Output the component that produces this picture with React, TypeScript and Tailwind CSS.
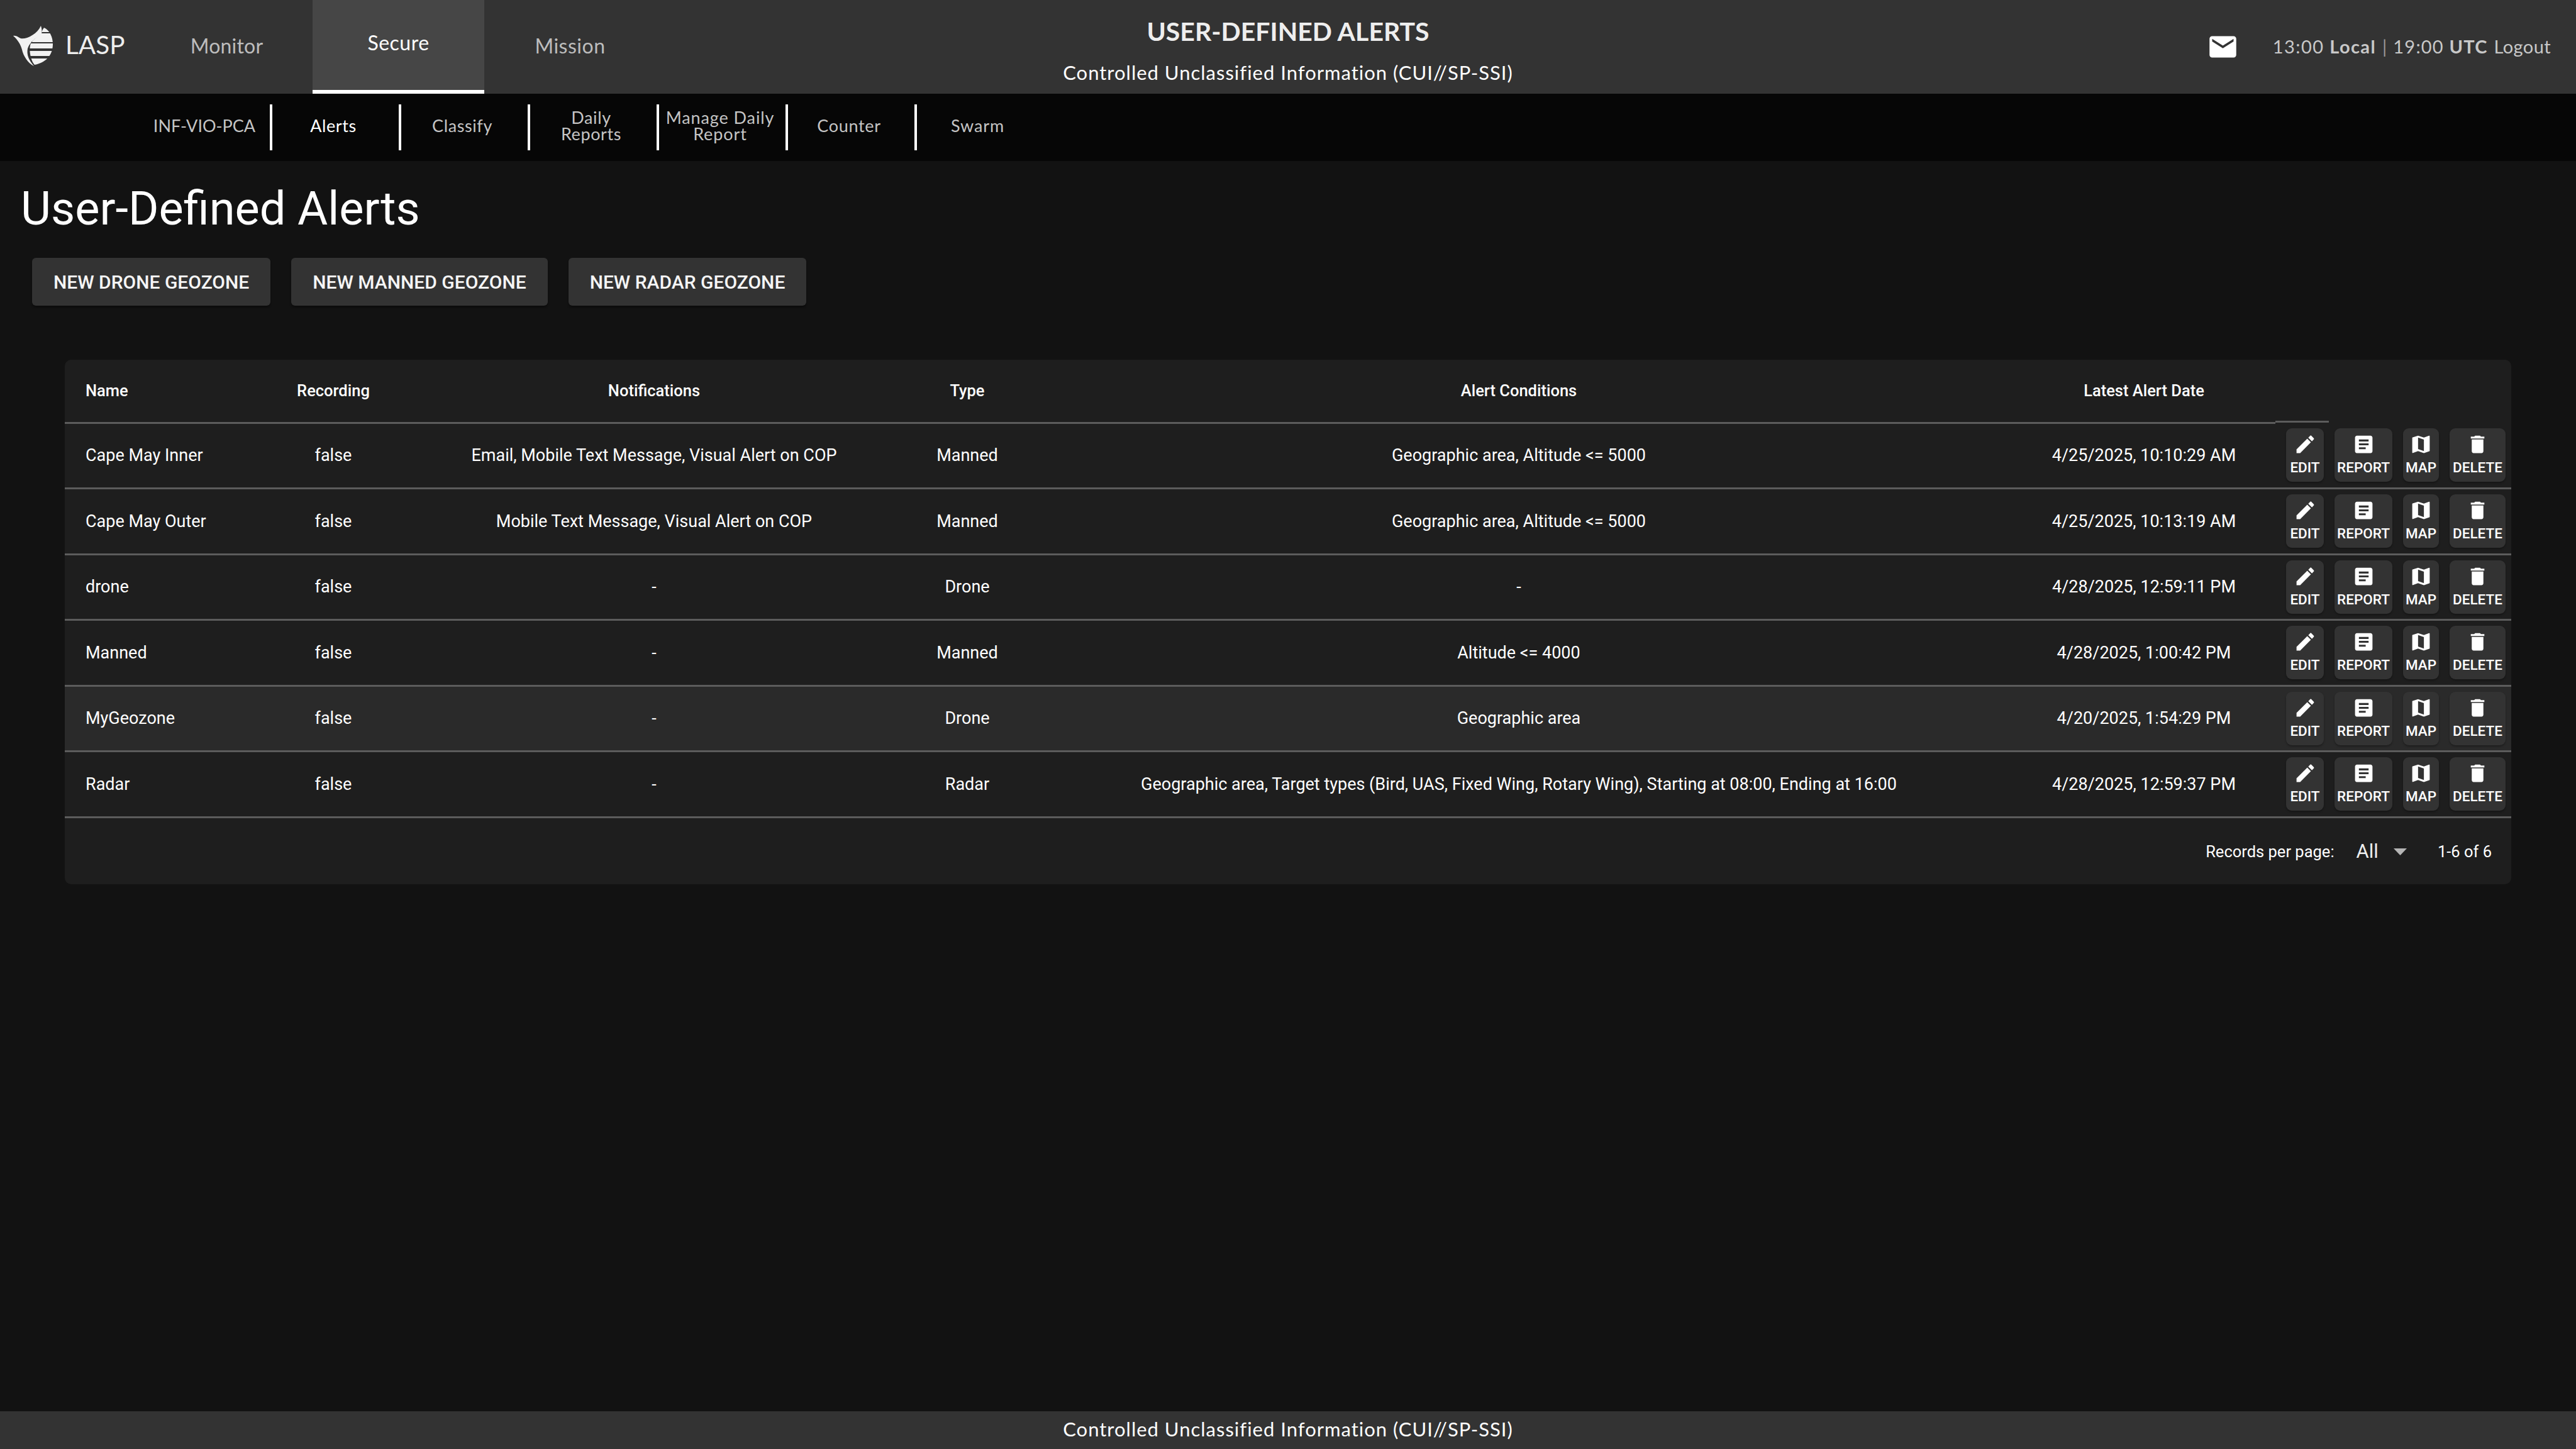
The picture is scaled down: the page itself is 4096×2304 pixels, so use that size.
import React from "react";

const P = {
  pencil: "M20.71,7.04C21.1,6.65 21.1,6 20.71,5.63L18.37,3.29C18,2.9 17.35,2.9 16.96,3.29L15.12,5.12L18.87,8.87M3,17.25V21H6.75L17.81,9.93L14.06,6.18L3,17.25Z",
  report: "M14,17H7V15H14M17,13H7V11H17M17,9H7V7H17M19,3H5C3.89,3 3,3.89 3,5V19A2,2 0 0,0 5,21H19A2,2 0 0,0 21,19V5C21,3.89 20.1,3 19,3Z",
  map: "M15,19L9,16.89V5L15,7.11M20.5,3C20.44,3 20.39,3 20.34,3L15,5.1L9,3L3.36,4.9C3.15,4.97 3,5.15 3,5.38V20.5A0.5,0.5 0 0,0 3.5,21C3.55,21 3.61,21 3.66,20.97L9,18.9L15,21L20.64,19.1C20.85,19 21,18.85 21,18.62V3.5A0.5,0.5 0 0,0 20.5,3Z",
  del: "M19,4H15.5L14.5,3H9.5L8.5,4H5V6H19M6,19A2,2 0 0,0 8,21H16A2,2 0 0,0 18,19V7H6V19Z",
  email: "M20,8L12,13L4,8V6L12,11L20,6M20,4H4C2.89,4 2,4.89 2,6V18A2,2 0 0,0 4,20H20A2,2 0 0,0 22,18V6C22,4.89 21.1,4 20,4Z",
};

function Icon({ d, className }: { d: string; className: string }) {
  return (
    <svg viewBox="0 0 24 24" className={className} fill="currentColor">
      <path d={d} />
    </svg>
  );
}

function Logo() {
  return (
    <svg viewBox="0 0 64 66" className="w-[64px] h-[66px]" fill="#f2f2f2">
      <defs>
        <clipPath id="shield">
          <path d="M49 5 C58 9 63 20 63 31 C63 46 55 60 34 64 C28 58 24 40 28 30 C32 22 44 18 47 8 Z" />
        </clipPath>
      </defs>
      <path d="M0 18 C5 17 9 21 12 22 C20 24 38 16 44 2 C46 8 46 14 44 17 C36 21 27 27 23 38 C21 48 25 57 33 66 C24 62 16 50 14 40 C12 32 7 24 0 18 Z" />
      <g clipPath="url(#shield)">
        <rect x="44" y="5" width="20" height="7" />
        <rect x="30" y="14" width="34" height="14" />
        <rect x="20" y="30" width="44" height="8" />
        <rect x="20" y="42" width="44" height="8" />
        <rect x="20" y="54" width="44" height="12" />
      </g>
    </svg>
  );
}

const subNav = [
  { label: "INF-VIO-PCA", cls: "w-[205px] h-[73px] flex items-center justify-center pr-[7px] pb-[5px] text-center text-[27px] leading-[25.6px] text-[#c4c4c4] border-r-4 border-white" },
  { label: "Alerts", cls: "w-[205px] h-[73px] flex items-center justify-center pr-[7px] pb-[5px] text-center text-[27px] leading-[25.6px] tracking-[0.6px] text-white border-r-4 border-white" },
  { label: "Classify", cls: "w-[205px] h-[73px] flex items-center justify-center pr-[7px] pb-[5px] text-center text-[27px] leading-[25.6px] tracking-[0.6px] text-[#c4c4c4] border-r-4 border-white" },
  { label: <>Daily<br />Reports</>, cls: "w-[205px] h-[73px] flex items-center justify-center pr-[7px] pb-[5px] text-center text-[27px] leading-[25.6px] tracking-[0.6px] text-[#c4c4c4] border-r-4 border-white" },
  { label: <>Manage Daily<br />Report</>, cls: "w-[205px] h-[73px] flex items-center justify-center pr-[7px] pb-[5px] text-center text-[27px] leading-[25.6px] tracking-[0.9px] text-[#c4c4c4] border-r-4 border-white" },
  { label: "Counter", cls: "w-[205px] h-[73px] flex items-center justify-center pr-[7px] pb-[5px] text-center text-[27px] leading-[25.6px] tracking-[0.7px] text-[#c4c4c4] border-r-4 border-white" },
  { label: "Swarm", cls: "w-[205px] h-[73px] flex items-center justify-center pr-[12px] pb-[5px] text-center text-[27px] leading-[25.6px] tracking-[0.9px] text-[#c4c4c4]" },
];

const rows = [
  ["Cape May Inner", "false", "Email, Mobile Text Message, Visual Alert on COP", "Manned", "Geographic area, Altitude <= 5000", "4/25/2025, 10:10:29 AM"],
  ["Cape May Outer", "false", "Mobile Text Message, Visual Alert on COP", "Manned", "Geographic area, Altitude <= 5000", "4/25/2025, 10:13:19 AM"],
  ["drone", "false", "-", "Drone", "-", "4/28/2025, 12:59:11 PM"],
  ["Manned", "false", "-", "Manned", "Altitude <= 4000", "4/28/2025, 1:00:42 PM"],
  ["MyGeozone", "false", "-", "Drone", "Geographic area", "4/20/2025, 1:54:29 PM"],
  ["Radar", "false", "-", "Radar", "Geographic area, Target types (Bird, UAS, Fixed Wing, Rotary Wing), Starting at 08:00, Ending at 16:00", "4/28/2025, 12:59:37 PM"],
];

const actions = [
  { label: "EDIT", d: P.pencil, w: "w-[60px]" },
  { label: "REPORT", d: P.report, w: "w-[92px]" },
  { label: "MAP", d: P.map, w: "w-[57px]" },
  { label: "DELETE", d: P.del, w: "w-[89px]" },
];

const headers = ["Recording", "Notifications", "Type", "Alert Conditions", "Latest Alert Date"];

export default function App() {
  return (
    <div className="h-[2304px] w-[4096px] flex flex-col bg-[#121212] text-white font-['Roboto',sans-serif] overflow-hidden">
      <header className="h-[149px] shrink-0 bg-[#333333] grid grid-cols-[1fr_auto_1fr] font-['Lato',sans-serif]">
        <div className="flex items-stretch">
          <div className="w-[224px] flex items-center pl-[21px] gap-[19px] pb-[6px]">
            <Logo />
            <span className="text-[40.5px] leading-none text-[#eeeeee]">LASP</span>
          </div>
          <div className="w-[273px] flex items-center justify-center pb-[4px] text-[32px] tracking-[0.2px] text-[#bdbdbd]">Monitor</div>
          <div className="w-[273px] flex items-center justify-center pb-[8px] text-[32px] tracking-[0.5px] text-white bg-[#464646] border-b-[6px] border-white">Secure</div>
          <div className="w-[273px] flex items-center justify-center pb-[4px] text-[32px] tracking-[0.5px] text-[#bdbdbd]">Mission</div>
        </div>
        <div className="flex flex-col items-center pt-[26px]">
          <div className="text-[41px] leading-[48px] font-bold text-[#eeeeee]">USER-DEFINED ALERTS</div>
          <div className="text-[31px] leading-[38px] mt-[22px] tracking-[1px] text-white">Controlled Unclassified Information (CUI//SP-SSI)</div>
        </div>
        <div className="flex items-center justify-end pr-[40px] pb-[1px] text-[29px] text-[#c8c8c8]">
          <Icon d={P.email} className="w-[51px] h-[51px] text-white mr-[54px]" />
          <span className="tracking-[1.4px]">13:00 <b>Local</b></span>
          <span className="mx-[10px] text-[#9a9a9a]">|</span>
          <span className="tracking-[1.2px]">19:00 <b>UTC</b></span>
          <span className="ml-[10px] tracking-[0.4px]">Logout</span>
        </div>
      </header>

      <nav className="h-[107px] shrink-0 bg-[#060606] flex items-center pl-[228px] font-['Lato',sans-serif]">
        {subNav.map((s, i) => (
          <div key={i} className={s.cls}>
            <span>{s.label}</span>
          </div>
        ))}
      </nav>

      <main className="flex-1 flex flex-col pt-[40px]">
        <h1 className="text-[74px] leading-[72px] pl-[33px] font-normal">User-Defined Alerts</h1>
        <div className="flex gap-[33px] pl-[51px] mt-[42px]">
          {["NEW DRONE GEOZONE", "NEW MANNED GEOZONE", "NEW RADAR GEOZONE"].map((b) => (
            <button key={b} className="h-[76px] px-[34px] rounded-[6px] bg-[#333333] text-[30px] font-medium text-[#f5f5f5] shadow-[0_3px_3px_rgba(0,0,0,0.35)]">
              {b}
            </button>
          ))}
        </div>

        <div className="ml-[103px] w-[3890px] mt-[86px] rounded-[10px] bg-[#1e1e1e] overflow-hidden">
          <table className="w-[3890px] table-fixed border-collapse text-[27px]">
            <colgroup>
              <col className="w-[323px]" />
              <col className="w-[208px]" />
              <col className="w-[812px]" />
              <col className="w-[184px]" />
              <col className="w-[1570px]" />
              <col className="w-[418px]" />
              <col className="w-[375px]" />
            </colgroup>
            <thead>
              <tr className="h-[100px]">
                <th className="text-left pl-[33px] text-[25.5px] font-medium border-b-[3px] border-[#5c5c5c]">Name</th>
                {headers.map((h) => (
                  <th key={h} className="text-center text-[25.5px] font-medium border-b-[3px] border-[#5c5c5c]">{h}</th>
                ))}
                <th className="relative">
                  <div className="absolute bottom-0 left-0 h-[3px] w-[85px] bg-[#5c5c5c]" />
                </th>
              </tr>
            </thead>
            <tbody>
              {rows.map((r, i) => (
                <tr key={i} className={i === 4 ? "h-[104.5px] bg-[#2a2a2a] border-b-[3px] border-[#5c5c5c]" : "h-[104.5px] border-b-[3px] border-[#5c5c5c]"}>
                  {r.map((c, j) => (
                    <td key={j} className={j === 0 ? "text-left pl-[33px] font-normal" : "text-center font-normal"}>{c}</td>
                  ))}
                  <td className="pl-[17px]">
                    <div className="flex gap-[17px]">
                      {actions.map((a) => (
                        <div key={a.label} className={`${a.w} h-[85px] shrink-0 rounded-[9px] bg-[#333333] flex flex-col items-center pt-[7px] shadow-[0_2px_3px_rgba(0,0,0,0.3)]`}>
                          <Icon d={a.d} className="w-[37px] h-[37px]" />
                          <span className="text-[22.5px] leading-[26px] mt-[5px] font-medium">{a.label}</span>
                        </div>
                      ))}
                    </div>
                  </td>
                </tr>
              ))}
            </tbody>
          </table>
          <div className="h-[105px] flex items-center justify-end pr-[31px] pt-[2px] text-[25.5px]">
            <span>Records per page:</span>
            <span className="ml-[35px] text-[31px] text-[#eeeeee]">All</span>
            <svg viewBox="0 0 21 11" className="w-[21px] h-[11px] ml-[24px]" fill="#b5b5b5">
              <path d="M0 0H21L10.5 11Z" />
            </svg>
            <span className="ml-[49px]">1-6 of 6</span>
          </div>
        </div>
      </main>

      <footer className="h-[60px] shrink-0 bg-[#333333] flex items-center justify-center pb-[3px] font-['Lato',sans-serif] text-[31px] tracking-[1px] text-white">
        Controlled Unclassified Information (CUI//SP-SSI)
      </footer>
    </div>
  );
}
